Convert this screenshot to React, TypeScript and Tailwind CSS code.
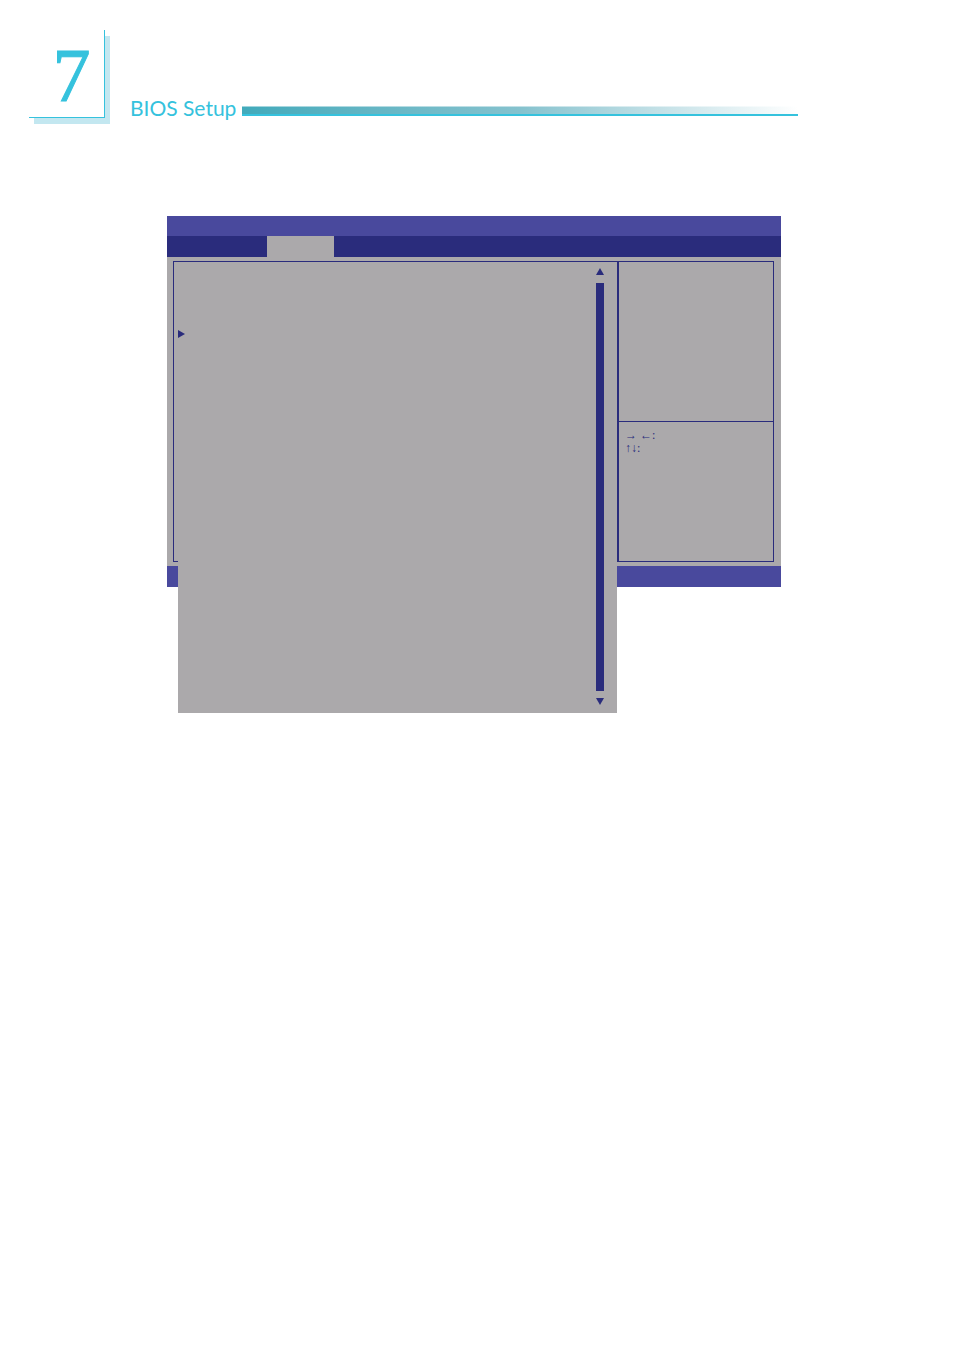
function ChapterHeader() {
    return (
        <header className="flex items-start pl-[29px] pr-[156px] pt-[30px]">
            <div className="flex h-[88px] w-[76px] shrink-0 items-center justify-center border-b border-r border-[#35c2dd] bg-white pl-[10px] pt-[2px] font-['Liberation_Serif',serif] text-[76px] leading-none text-[#35c2dd] shadow-[5px_6px_0_0_#c3e7f0] [-webkit-text-stroke:1px_#35c2dd]">
                7
            </div>
            <div className="flex flex-1 items-end gap-[6px] pl-[25px] pt-[62px]">
                <h1 className="font-['Lato',sans-serif] text-[21px] leading-8 text-[#35c2dd]">BIOS Setup</h1>
                <div className="mb-2 h-[10px] flex-1 border-b-2 border-t border-b-[#35c2dd] border-t-white/50 bg-linear-to-r from-[#41aabb] via-[#85c2ce] to-white" />
            </div>
        </header>
    )
}

function ScrollRail() {
    return (
        <div className="flex w-2 flex-col items-center">
            <svg className="h-[7px] w-2" viewBox="0 0 8 7" fill="#2a2c7c">
                <path d="M4 0L8 7H0z" />
            </svg>
            <div className="mb-[7px] mt-2 w-2 flex-1 bg-[#2a2c7c]" />
            <svg className="h-[7px] w-2" viewBox="0 0 8 7" fill="#2a2c7c">
                <path d="M0 0H8L4 7z" />
            </svg>
        </div>
    )
}

function HelpPanel() {
    return (
        <aside className="flex w-[156px] shrink-0 flex-col border-l-2 border-[#2a2c7c]">
            <div className="h-[160px] border-b border-[#2a2c7c]" />
            <div className="px-[6px] pt-[7px] font-['Liberation_Serif',serif] text-[12px] leading-[13px] text-[#2a2c7c]">
                <p>→ ←:</p>
                <p>↑↓:</p>
            </div>
        </aside>
    )
}

function BiosScreen() {
    return (
        <main className="ml-[167px] mr-[173px] mt-[92px] bg-[#aba9ab]">
            <div className="h-5 bg-[#49499d]" />
            <nav className="flex h-[21px] bg-[#2a2c7c] pl-[100px]">
                <div className="w-[67px] bg-[#aba9ab]" />
            </nav>
            <div className="pb-1 pl-[6px] pr-[7px] pt-1">
                <div className="flex h-[301px] border border-[#2a2c7c]">
                    <section className="relative flex-1">
                        {/* the option list is longer than the screen and hangs over the footer */}
                        <div className="absolute left-1 right-0 top-0 flex h-[451px] justify-between bg-[#aba9ab] pb-2 pr-[13px] pt-[6px]">
                            <svg className="mt-[62px] h-2 w-[7px]" viewBox="0 0 7 8" fill="#2a2c7c">
                                <path d="M0 0L7 4L0 8z" />
                            </svg>
                            <ScrollRail />
                        </div>
                    </section>
                    <HelpPanel />
                </div>
            </div>
            <footer className="h-[21px] bg-[#49499d]" />
        </main>
    )
}

export default function App() {
    return (
        <div className="min-h-screen bg-white">
            <ChapterHeader />
            <BiosScreen />
        </div>
    )
}
